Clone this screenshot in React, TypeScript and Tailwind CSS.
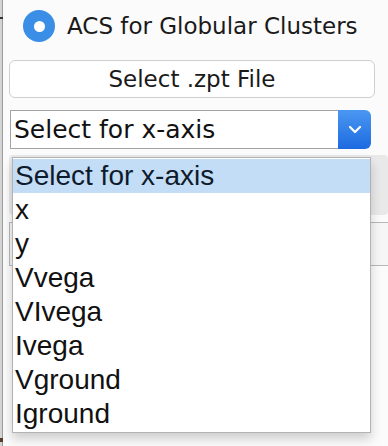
import React from 'react';

const comic = { fontFamily: '"DejaVu Sans", sans-serif' };

const App = () => {
  const options = ['Select for x-axis', 'x', 'y', 'Vvega', 'VIvega', 'Ivega', 'Vground', 'Iground'];

  return (
    <div className="flex h-[446px] w-[388px] overflow-hidden bg-[#fbfbfb]">
      {/* window edge on the left */}
      <div className="relative w-[3px] shrink-0 border-r border-[#9c9c9c] bg-[#d4d4d4]">
        <div className="absolute left-0 top-[17px] h-[2px] w-[3px] bg-[#333]" />
        <div className="absolute bottom-[4px] left-0 h-[4px] w-[3px] bg-[#5a3a2a]" />
      </div>

      <div className="relative flex-1" style={comic}>
        <label className="flex h-[52px] items-center gap-[12px] pl-[20px]">
          <span className="flex h-8 w-8 items-center justify-center rounded-full bg-[#3a8ee6]">
            <span className="h-[11px] w-[11px] rounded-full bg-white" />
          </span>
          <span className="text-[23px] text-[#1a1a1a]">ACS for Globular Clusters</span>
        </label>

        <button className="ml-[6px] mt-[8px] flex h-[38px] w-[366px] items-center justify-center rounded-[6px] border border-[#cfcfcf] bg-white text-[23px] text-[#1a1a1a]">
          Select .zpt File
        </button>

        <div className="ml-[7px] mt-[12px] flex h-[39px] w-[361px]">
          <div className="flex flex-1 items-end border border-r-0 border-[#a3a3a3] bg-white pb-[1px] pl-[3px] text-[25px] leading-[34px] text-[#111]">
            Select for x-axis
          </div>
          <div className="flex w-[33px] items-center justify-center rounded-r-[6px] bg-gradient-to-b from-[#4a97f2] to-[#1c6ae0]">
            <svg width="14" height="9" viewBox="0 0 14 9" fill="none">
              <path d="M2 2l5 5 5-5" stroke="white" strokeWidth="2.2" strokeLinecap="round" strokeLinejoin="round" />
            </svg>
          </div>
        </div>

        {/* controls hidden behind the open list */}
        <div className="ml-[6px] mt-[6px] h-[60px] rounded-[4px] bg-[#e9e9e9]" />
        <div className="ml-[6px] mt-[7px] h-[44px] border border-r-0 border-[#b8b8b8] bg-[#f6f6f6]" />

        {/* open option list */}
        <div className="absolute left-[9px] top-[157px] h-[276px] w-[359px] border border-[#b3b3b3] bg-white py-[1px] shadow-[0_6px_10px_rgba(0,0,0,0.18)]">
          {options.map((opt, i) => (
            <div
              key={opt}
              className={
                i === 0
                  ? 'h-[34px] bg-[#c4ddf6] pl-[2px] text-[28px] leading-[34px] text-[#0e1b2c]'
                  : 'h-[34px] pl-[2px] text-[28px] leading-[34px] text-[#111]'
              }
              style={{ fontFamily: '"Liberation Sans", Arial, sans-serif' }}
            >
              {opt}
            </div>
          ))}
        </div>
      </div>
    </div>
  );
};

export default App;
